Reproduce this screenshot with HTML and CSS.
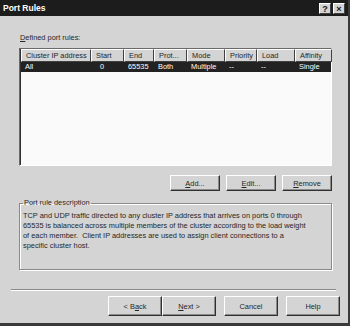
FILE: index.html
```html
<!DOCTYPE html>
<html lang="en">
<head>
<meta charset="UTF-8">
<meta name="viewport" content="width=device-width, initial-scale=1.0">
<title>Port Rules</title>
<link rel="stylesheet" href="styles.css">
</head>
<body>
<div class="window">
    <div class="titlebar">
        <span class="title">Port Rules</span>
        <span class="caption-buttons">
            <span class="cap-btn">?</span>
            <span class="cap-btn">&#215;</span>
        </span>
    </div>
    <div class="content">
        <div class="list-label"><u>D</u>efined port rules:</div>
        <div class="list">
            <div class="row head">
                <div class="cell">Cluster IP address</div>
                <div class="cell">Start</div>
                <div class="cell">End</div>
                <div class="cell">Prot...</div>
                <div class="cell">Mode</div>
                <div class="cell">Priority</div>
                <div class="cell">Load</div>
                <div class="cell">Affinity</div>
            </div>
            <div class="row selected">
                <div class="cell">All</div>
                <div class="cell num">0</div>
                <div class="cell">65535</div>
                <div class="cell">Both</div>
                <div class="cell">Multiple</div>
                <div class="cell">--</div>
                <div class="cell">--</div>
                <div class="cell">Single</div>
            </div>
        </div>
        <div class="rule-buttons">
            <button class="btn small"><u>A</u>dd...</button>
            <button class="btn small"><u>E</u>dit...</button>
            <button class="btn small"><u>R</u>emove</button>
        </div>
        <fieldset class="group">
            <legend>Port rule description</legend>
            <p class="desc">TCP and UDP traffic directed to any cluster IP address that arrives on ports 0 through<br>
            65535 is balanced across multiple members of the cluster according to the load weight<br>
            of each member.&nbsp; Client IP addresses are used to assign client connections to a<br>
            specific cluster host.</p>
        </fieldset>
    </div>
    <div class="separator"></div>
    <div class="footer">
        <div class="nav-pair">
            <button class="btn">&lt; B<u>a</u>ck</button>
            <button class="btn"><u>N</u>ext &gt;</button>
        </div>
        <button class="btn">Cancel</button>
        <button class="btn">Help</button>
    </div>
</div>
</body>
</html>
```

FILE: styles.css
```css
body {
    margin: 0;
    font-family: "Liberation Sans", Arial, sans-serif;
    font-size: 7.4px;
    color: #262626;
    background-color: #d2d2d2;
}
.window {
    width: 350px;
    height: 326px;
    box-sizing: border-box;
    background-color: #d4d4d4;
    border-right: 2px solid #3a3a3a;
    border-bottom: 3px solid #3a3a3a;
    display: flex;
    flex-direction: column;
}
.titlebar {
    height: 16px;
    background-color: #1c1c1c;
    color: #fff;
    display: flex;
    align-items: center;
    justify-content: space-between;
    padding: 0 3px 0 3px;
}
.title {
    font-weight: bold;
    font-size: 8.5px;
}
.caption-buttons {
    display: flex;
    gap: 2px;
}
.cap-btn {
    width: 12px;
    height: 11px;
    box-sizing: border-box;
    background-color: #d4d4d4;
    color: #111;
    font-weight: bold;
    font-size: 9px;
    line-height: 10px;
    text-align: center;
    border: 1px solid;
    border-color: #fff #404040 #404040 #fff;
}
.content {
    padding: 17px 16px 0 19px;
}
.list-label {
    line-height: 10px;
    height: 10px;
    margin-left: 1px;
}
.list {
    margin-top: 5px;
    height: 118px;
    box-sizing: border-box;
    background-color: #fafafa;
    border: 1px solid;
    border-color: #6a6a6a #fff #fff #6a6a6a;
    box-shadow: inset 1px 1px #303030;
}
.row {
    display: grid;
    grid-template-columns: 70px 33px 30px 33px 38px 32px 38px 37px;
    margin-left: 1px;
}
.head .cell {
    height: 13px;
    line-height: 11px;
    box-sizing: border-box;
    background-color: #d4d4d4;
    padding-left: 4px;
    border: 1px solid;
    border-color: #fff #404040 #404040 #fff;
    white-space: nowrap;
    overflow: hidden;
}
.selected {
    background-color: #222;
    color: #fff;
}
.selected .cell {
    height: 10px;
    line-height: 10px;
    padding-left: 4px;
    white-space: nowrap;
}
.selected .num {
    padding-left: 9px;
}
.rule-buttons {
    display: flex;
    justify-content: flex-end;
    gap: 6px;
    margin-top: 9px;
}
.btn {
    font-family: "Liberation Sans", Arial, sans-serif;
    font-size: 7.4px;
    color: #262626;
    width: 54px;
    height: 20px;
    padding: 0;
    background-color: #d4d4d4;
    border: 1px solid;
    border-color: #fff #303030 #303030 #fff;
    box-shadow: inset -1px -1px #8a8a8a;
}
.btn.small {
    height: 16px;
    width: 50px;
}
.group {
    margin: 7px 0 0 0;
    padding: 3px 4px 0 3px;
    height: 72px;
    box-sizing: border-box;
    border: 1px solid #8a8a8a;
    box-shadow: 1px 1px #fff, inset 1px 1px #fff;
}
.group legend {
    padding: 0 1px;
    margin-left: 0;
    line-height: 10px;
}
.desc {
    margin: 0;
    line-height: 10px;
    white-space: nowrap;
}
.separator {
    margin: 19px 12px 0 11px;
    border-top: 1px solid #8a8a8a;
    border-bottom: 1px solid #fff;
}
.footer {
    display: flex;
    justify-content: flex-end;
    gap: 8px;
    margin-top: 5px;
    padding-right: 8px;
}
.nav-pair {
    display: flex;
}
```
